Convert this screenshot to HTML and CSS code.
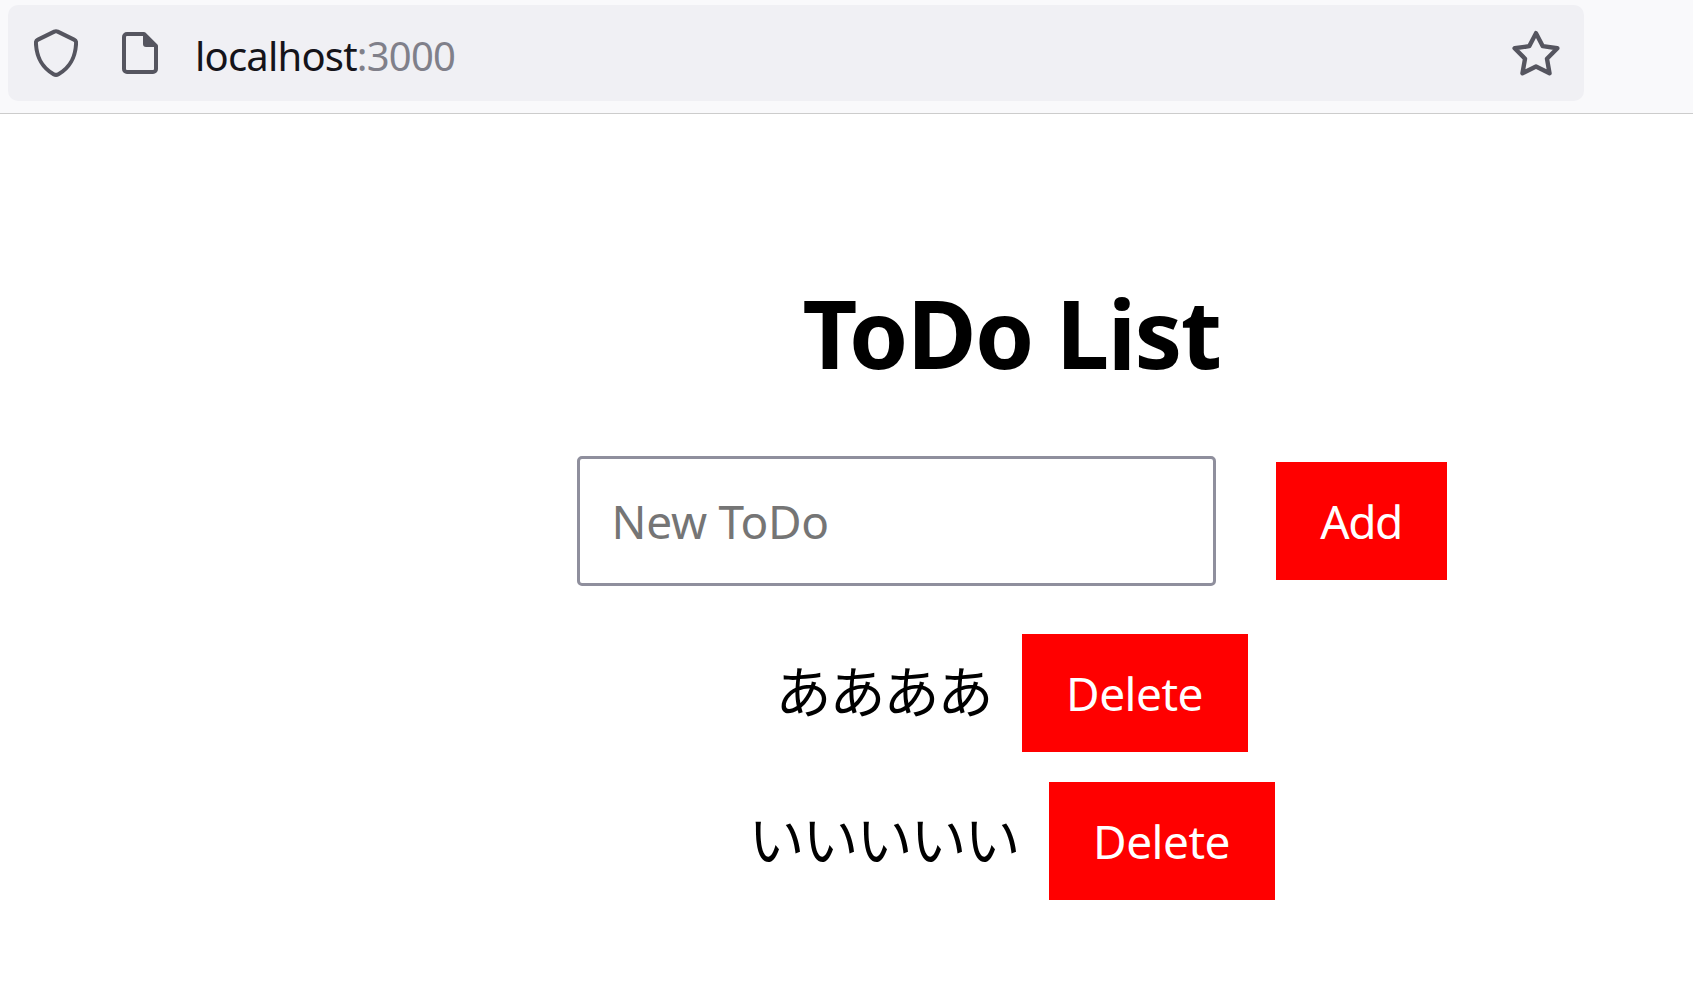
FILE: index.html
```html
<!DOCTYPE html>
<html lang="en">
<head>
    <meta charset="UTF-8">
    <title>ToDo List</title>
    <link rel="stylesheet" href="styles.css">
</head>
<body>

<header class="toolbar">
    <div class="urlbar">
        <svg class="icon-shield" width="44" height="48" viewBox="0 0 44 48" fill="none">
            <path d="M20.3 2.6 L4 10.6 C2.6 11.3 1.8 12.5 1.9 14 C2.5 27 6.5 37.5 19.6 45.2 C21.2 46.1 22.8 46.1 24.4 45.2 C37.5 37.5 41.5 27 42.1 14 C42.2 12.5 41.4 11.3 40 10.6 L23.7 2.6 C22.6 2.1 21.4 2.1 20.3 2.6 Z" stroke="#55555f" stroke-width="4" stroke-linejoin="round"/>
        </svg>
        <svg class="icon-page" width="36" height="42" viewBox="0 0 36 42" fill="none">
            <path d="M5 2 H22 L34 14 V37 A3 3 0 0 1 31 40 H5 A3 3 0 0 1 2 37 V5 A3 3 0 0 1 5 2 Z" stroke="#55555f" stroke-width="4" stroke-linejoin="round"/>
            <path d="M21 1.5 L34.5 15 H24 A3 3 0 0 1 21 12 Z" fill="#55555f"/>
        </svg>
        <span class="url">localhost<span class="url-port">:3000</span></span>
        <svg class="icon-star" width="48" height="47" viewBox="0 0 46 45" fill="none">
            <path d="M23 3 L29.5 15.5 L43.5 17.5 L33.5 27.5 L36 41.5 L23 35 L10 41.5 L12.5 27.5 L2.5 17.5 L16.5 15.5 Z" stroke="#55555f" stroke-width="4.2" stroke-linejoin="round"/>
        </svg>
    </div>
</header>

<main class="app">
    <h1 class="title">ToDo List</h1>

    <form class="new-todo">
        <input class="todo-input" type="text" placeholder="New ToDo">
        <button class="btn btn-add" type="button">Add</button>
    </form>

    <ul class="todo-list">
        <li class="todo-item">
            <span class="todo-text">ああああ</span>
            <button class="btn btn-delete" type="button">Delete</button>
        </li>
        <li class="todo-item">
            <span class="todo-text">いいいいい</span>
            <button class="btn btn-delete" type="button">Delete</button>
        </li>
    </ul>
</main>

</body>
</html>
```

FILE: styles.css
```css
body {
    margin: 0;
    background: #fff;
    color: #000;
    font-family: "Noto Sans", "Noto Sans CJK JP", sans-serif;
}
.toolbar {
    height: 108px;
    padding: 5px 109px 0 8px;
    background: #f9f9fb;
    border-bottom: 1px solid #ccc;
}
.urlbar {
    height: 96px;
    padding: 0 24px 0 26px;
    display: flex;
    align-items: center;
    background: #f0f0f4;
    border-radius: 10px;
}
.icon-page { margin-left: 44px; }
.url {
    margin-left: 37px;
    padding-top: 4px;
    font-size: 40px;
    letter-spacing: -0.8px;
    color: #15141a;
}
.url-port { color: #80808a; }
.icon-star { margin-left: auto; }

.app {
    padding: 153px 0 40px 330px;
    display: flex;
    flex-direction: column;
    align-items: center;
}
.title {
    margin: 0;
    font-size: 95px;
    line-height: 130px;
    font-weight: 700;
    letter-spacing: -1.5px;
}
.new-todo {
    margin-top: 59px;
    display: flex;
    align-items: center;
    gap: 60px;
}
.todo-input {
    width: 639px;
    height: 130px;
    padding: 0 32px;
    box-sizing: border-box;
    border: 3px solid #8f8f9d;
    border-radius: 5px;
    font-family: inherit;
    font-size: 46px;
    letter-spacing: -0.3px;
    outline: none;
}
.todo-input::placeholder { color: #757575; opacity: 1; }
.btn {
    height: 118px;
    padding: 0;
    border: none;
    background: #f00;
    color: #fff;
    font-family: inherit;
    font-size: 46px;
    letter-spacing: -0.5px;
}
.btn-add { width: 171px; letter-spacing: -1.5px; }
.btn-delete { width: 226px; }
.todo-list {
    margin: 48px 0 0;
    padding: 0;
    list-style: none;
    display: flex;
    flex-direction: column;
    align-items: center;
    gap: 30px;
}
.todo-item {
    display: flex;
    align-items: center;
    gap: 30px;
}
.todo-text {
    padding-bottom: 10px;
    font-family: "Noto Sans CJK JP", sans-serif;
    font-size: 56px;
    letter-spacing: -2px;
}
```
